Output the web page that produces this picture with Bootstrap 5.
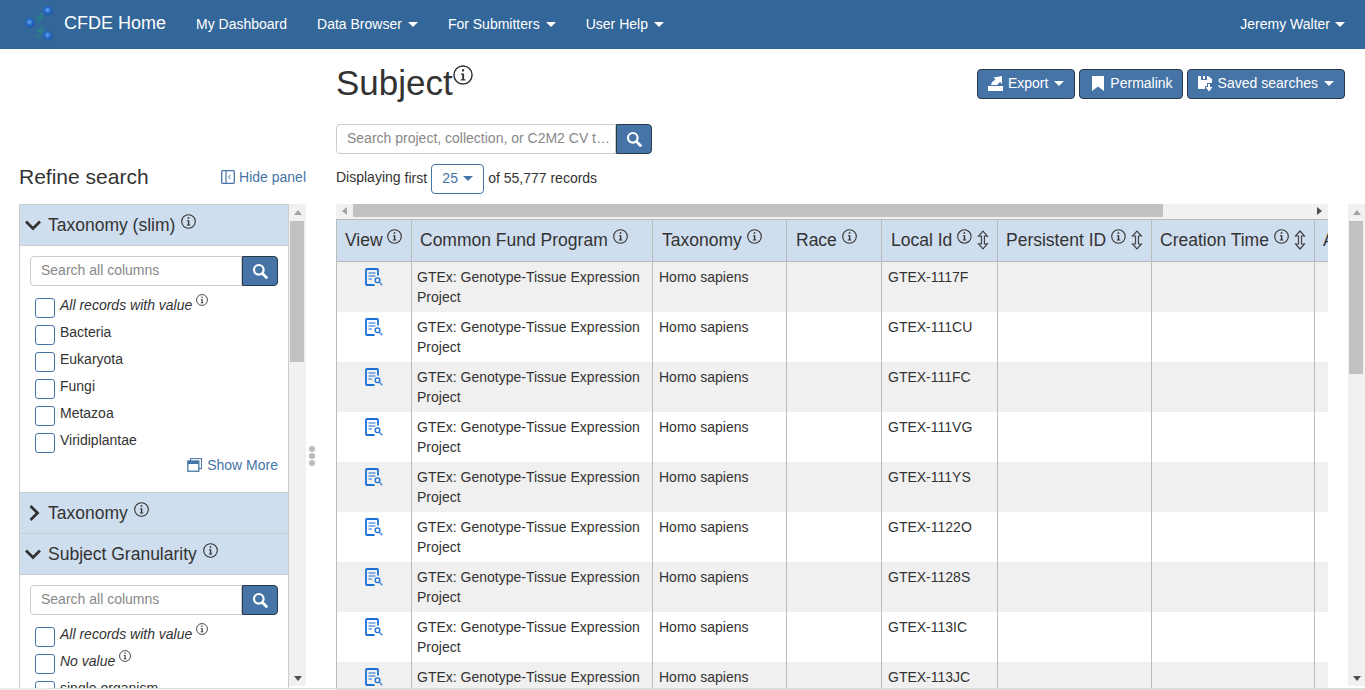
<!DOCTYPE html>
<html lang="en">
<head>
    <meta charset="UTF-8">
    <meta name="viewport" content="width=device-width, initial-scale=1.0">
    <title>Subject</title>
    <link href="https://cdn.jsdelivr.net/npm/bootstrap@5.3.0/dist/css/bootstrap.min.css" rel="stylesheet">
    <style>
        html, body { height: 690px; overflow: hidden; }
        body { font-family: "Liberation Sans", Arial, sans-serif; font-size: 14px; color: #333; line-height: 20px; }
        svg { display: block; }
        .ico-inline { display: inline-block; vertical-align: baseline; }

        .top-bar { background: #336699; height: 49px; padding: 0 20px 0 24px; }
        .top-bar .navbar-brand { font-size: 18px; color: #fff; padding: 0; margin: 0 30px 0 0; gap: 8px; position: relative; top: -2px; }
        .top-bar .navbar-brand svg { margin-top: 3px; }
        .top-bar .navbar-nav .nav-link { color: #fff; font-size: 14px; padding: 0; margin-right: 30px; line-height: 20px; position: relative; top: -1px; }
        .top-bar .navbar-nav .nav-link .caret-down { margin-left: 6px; }
        .top-bar .navbar-nav .user-link { margin-right: 0; }
        .top-bar .navbar-nav .user-link .caret-down { margin-left: 5px; }
        .caret-down { display: inline-block; width: 0; height: 0; margin-left: 5px; vertical-align: 2px; border-top: 5px solid currentColor; border-left: 5.5px solid transparent; border-right: 5.5px solid transparent; }

        .page-wrap { height: 639px; }
        .side-col { width: 306px; padding-left: 19px; flex: none; }
        .side-head { height: 40px; margin-top: 115px; }
        .side-head h2 { font-size: 21px; font-weight: 400; line-height: 26px; margin: 0; color: #333; }
        .hide-link, .more-link { color: #4674a7; text-decoration: none; font-size: 14px; }
        .hide-link { margin-top: 3px; }
        .side-box { height: 484px; }
        .facet-panel { width: 271px; border: 1px solid #ccc; border-bottom: 0; overflow: hidden; }
        .facet-head { background: #cfdeef; height: 41px; padding: 0 8px 0 4px; font-size: 17.5px; border-bottom: 1px solid #ccc; gap: 6px; flex: none; }
        .facet-head .chev { width: 18px; flex: none; }
        .facet-head .head-info { margin-bottom: 8px; }
        .facet-body { padding: 10px 10px 0 10px; border-bottom: 1px solid #ccc; }
        .facet-search { height: 30px; }
        .facet-search .form-control, .main-search .form-control { border: 1px solid #ccc; border-radius: 4px 0 0 4px; font-size: 14px; padding: 0 2px 2px 10px; height: 100%; box-shadow: none; color: #333; text-overflow: ellipsis; }
        .facet-search .form-control::placeholder, .main-search .form-control::placeholder { color: #888; opacity: 1; }
        .find-btn { background: #4674a7; border: 1px solid #2b3a4a; border-radius: 0 4px 4px 0; width: 36px; padding: 0; flex: none; }
        .check-list { margin: 7px 0 0 5px; }
        .check-row { height: 27px; gap: 5px; }
        .check-box { width: 20px; height: 20px; border: 1px solid #4674a7; border-radius: 3px; background: #fff; flex: none; margin-top: 5px; }
        .check-row .lbl { padding-top: 2px; }
        .check-row .lbl svg { margin-top: -1px; }
        .show-more { height: 25px; padding-bottom: 5px; gap: 5px; margin-bottom: 12px; }

        .scroll-y { width: 17px; flex: none; background: #f1f1f1; margin-bottom: 2px; }
        .scroll-x { height: 15px; background: #f1f1f1; flex: none; }
        .arrow-box { height: 16px; flex: none; }
        .arrow-box-h { width: 17px; flex: none; height: 13px; }
        .tri-up { width: 0; height: 0; border-left: 4.5px solid transparent; border-right: 4.5px solid transparent; border-bottom: 5px solid #a3a3a3; }
        .tri-down { width: 0; height: 0; border-left: 4.5px solid transparent; border-right: 4.5px solid transparent; border-top: 5px solid #505050; }
        .tri-left { width: 0; height: 0; border-top: 4.5px solid transparent; border-bottom: 4.5px solid transparent; border-right: 5px solid #a3a3a3; }
        .tri-right { width: 0; height: 0; border-top: 4.5px solid transparent; border-bottom: 4.5px solid transparent; border-left: 5px solid #505050; }
        .thumb { background: #c1c1c1; }
        .thumb-y { margin: 1px 2px 0 1px; flex: none; }
        .scroll-x .thumb { height: 13px; }
        .drag-handle { width: 30px; flex: none; gap: 1px; margin-top: 397px; height: 20px; padding-left: 3px; }
        .drag-handle i { width: 6px; height: 6px; border-radius: 50%; background: #bbb; display: block; }

        .main-col { flex: 1 1 0; min-width: 0; }
        .title-row { padding: 14px 20px 0 0; height: 75px; }
        .title-row h1 { font-size: 35px; line-height: 40px; font-weight: 400; margin: 0; color: #333; }
        .title-row h1 .title-info { position: relative; top: -10px; }
        .act-row { margin-top: 6px; }
        .act-btn { background: #4674a7; color: #fff; border: 1px solid #2b3a4a; border-radius: 4px; height: 30px; font-size: 14px; padding: 0 10px 2px; gap: 5px; }
        .act-btn .caret-down { margin-left: 1px; vertical-align: 0; }
        .act-btn .mark-ico { margin-left: 2px; margin-right: 1px; }
        .act-btn.perma-btn { padding-right: 9px; }
        .main-search { width: 316px; height: 30px; }
        .count-row { margin-top: 10px; height: 30px; gap: 4px; }
        .count-btn { border: 1px solid #4674a7; background: #fff; color: #4674a7; border-radius: 4px; width: 53px; height: 30px; padding: 0 0 3px; font-size: 14px; }
        .count-row .count-txt { position: relative; top: -1px; }
        .count-row .disp-word { position: relative; top: -2px; }

        .table-zone { height: 484px; margin-top: 10px; gap: 20px; }
        .table-wrap { width: 992px; flex: none; overflow: hidden; }
        .rec-table { table-layout: fixed; width: 1173px; margin: 0; border-collapse: collapse; color: #333; }
        .rec-table th { background: #cfdeef; font-size: 17.5px; font-weight: 400; height: 42px; padding: 0 8px 2px; border: 1px solid #bbb; white-space: nowrap; vertical-align: middle; box-shadow: none; overflow: hidden; }
        .rec-table th:nth-child(3), .rec-table th:nth-child(4), .rec-table th:nth-child(5) { padding-left: 9px; }
        .rec-table td { font-size: 14px; height: 50px; padding: 5px 5px 0; vertical-align: top; border: 0; border-left: 1px solid #bbb; border-right: 1px solid #bbb; line-height: 20px; background: #fff; box-shadow: none; color: #333; }
        .rec-table td:nth-child(3), .rec-table td:nth-child(5) { padding-left: 6px; }
        .rec-table tr:nth-child(odd) td { background: #f0f0f0; }
        .rec-table td.view-cell { padding-top: 6px; }
        .th-inner { gap: 5px; }
        .th-inner .head-info { margin-bottom: 6px; }
        .th-inner .view-info { margin-left: -1px; }

        .bottom-strip { height: 2px; }
        .strip-a { width: 48px; background: #ededed; }
        .strip-b { width: 288px; background: #f6f6f6; border-top: 1px solid #ddd; }
        .strip-c { flex: 1 1 0; background: #dcdcdc; }
    </style>
</head>
<body>
    <svg width="0" height="0" style="position:absolute">
        <defs>
            <radialGradient id="orb" cx="45%" cy="40%" r="60%">
                <stop offset="0" stop-color="#6aa8ee"/>
                <stop offset="0.55" stop-color="#1f66c4"/>
                <stop offset="1" stop-color="#2a5a96"/>
            </radialGradient>
            <symbol id="i-info" viewBox="0 0 15 15">
                <circle cx="7.5" cy="7.5" r="6.800" fill="none" stroke="currentColor" stroke-width="1.100"/>
                <rect x="6.700" y="3.200" width="1.600" height="1.600" fill="currentColor"/>
                <path d="M6 6.300h2.300v4.300h1v1H5.800v-1h1.100V7.300H6z" fill="currentColor"/>
            </symbol>
            <symbol id="i-search" viewBox="0 0 16 16">
                <circle cx="6.800" cy="6.800" r="4.800" fill="none" stroke="#fff" stroke-width="2.200"/>
                <path d="M10.400 10.400l4 4" stroke="#fff" stroke-width="2.800" stroke-linecap="round"/>
            </symbol>
            <symbol id="i-view" viewBox="0 0 18 18">
                <path d="M13 7.500V2a1 1 0 0 0-1-1H2a1 1 0 0 0-1 1v14a1 1 0 0 0 1 1h7.500" fill="none" stroke="#1a6fd6" stroke-width="1.800"/>
                <path d="M3.500 5h7M3.500 8h7M3.500 11h3.500" stroke="#1a6fd6" stroke-width="1.200"/>
                <circle cx="12.500" cy="12.300" r="2.400" fill="none" stroke="#1a6fd6" stroke-width="1.300"/>
                <path d="M14.300 14.200l3 3" stroke="#4a88d8" stroke-width="1.600"/>
            </symbol>
            <symbol id="i-sort" viewBox="0 0 12 20">
                <path d="M6 1L1.500 6h3v8h-3L6 19l4.500-5h-3V6h3z" fill="none" stroke="#444" stroke-width="1.200"/>
            </symbol>
            <symbol id="i-down" viewBox="0 0 18 12">
                <path d="M2 2.500l7 7 7-7" fill="none" stroke="#333" stroke-width="2.800"/>
            </symbol>
            <symbol id="i-right" viewBox="0 0 12 18">
                <path d="M2.500 2l7 7-7 7" fill="none" stroke="#333" stroke-width="2.800"/>
            </symbol>
        </defs>
    </svg>

    <nav class="navbar navbar-expand top-bar d-flex align-items-center flex-nowrap">
        <a class="navbar-brand d-flex align-items-center" href="#">
            <svg width="32" height="36" viewBox="0 0 32 36">
                <path d="M18.500 6.500l-5 5h4.500l-5.500 6M20 19.500l-6 5.500h5l-7 6" fill="none" stroke="#2a7f8a" stroke-width="1.800"/>
                <circle cx="24" cy="5" r="5" fill="url(#orb)"/>
                <circle cx="6" cy="17" r="5" fill="url(#orb)"/>
                <circle cx="24" cy="30" r="5" fill="url(#orb)"/>
            </svg>
            CFDE Home
        </a>
        <ul class="navbar-nav flex-row">
            <li class="nav-item"><a class="nav-link" href="#">My Dashboard</a></li>
            <li class="nav-item"><a class="nav-link" href="#">Data Browser<span class="caret-down"></span></a></li>
            <li class="nav-item"><a class="nav-link" href="#">For Submitters<span class="caret-down"></span></a></li>
            <li class="nav-item"><a class="nav-link" href="#">User Help<span class="caret-down"></span></a></li>
        </ul>
        <ul class="navbar-nav ms-auto">
            <li class="nav-item"><a class="nav-link user-link" href="#">Jeremy Walter<span class="caret-down"></span></a></li>
        </ul>
    </nav>

    <div class="page-wrap d-flex">
        <aside class="side-col d-flex flex-column">
            <div class="side-head d-flex justify-content-between align-items-start">
                <h2>Refine search</h2>
                <a class="hide-link d-flex align-items-center gap-1" href="#">
                    <svg width="14" height="14" viewBox="0 0 14 14"><rect x=".7" y=".7" width="12.600" height="12.600" rx="1" fill="none" stroke="#4674a7" stroke-width="1.300"/><path d="M5 1v12" stroke="#4674a7" stroke-width="1.200"/><path d="M9.500 5L7.500 7l2 2" fill="none" stroke="#4674a7"/></svg>
                    Hide panel
                </a>
            </div>
            <div class="side-box d-flex">
                <div class="facet-panel">
                    <div class="facet-head d-flex align-items-center">
                        <span class="chev"><svg width="18" height="12"><use href="#i-down"/></svg></span>
                        <span>Taxonomy (slim)</span>
                        <svg class="head-info" width="15" height="15"><use href="#i-info"/></svg>
                    </div>
                    <div class="facet-body">
                        <div class="facet-search d-flex">
                            <input class="form-control" placeholder="Search all columns">
                            <button class="find-btn d-flex align-items-center justify-content-center"><svg width="16" height="16"><use href="#i-search"/></svg></button>
                        </div>
                        <div class="check-list" id="slimList"></div>
                        <div class="show-more d-flex justify-content-end align-items-center">
                            <svg width="15" height="14" viewBox="0 0 15 14"><rect x="3.500" y=".6" width="11" height="10" fill="#fff" stroke="#4674a7"/><rect x=".8" y="3" width="11" height="10.200" fill="#fff" stroke="#4674a7" stroke-width="1.300"/><rect x="1" y="3" width="10.600" height="3" fill="#4674a7"/></svg>
                            <a class="more-link" href="#">Show More</a>
                        </div>
                    </div>
                    <div class="facet-head d-flex align-items-center">
                        <span class="chev ps-1"><svg width="12" height="18"><use href="#i-right"/></svg></span>
                        <span>Taxonomy</span>
                        <svg class="head-info" width="15" height="15"><use href="#i-info"/></svg>
                    </div>
                    <div class="facet-head d-flex align-items-center">
                        <span class="chev"><svg width="18" height="12"><use href="#i-down"/></svg></span>
                        <span>Subject Granularity</span>
                        <svg class="head-info" width="15" height="15"><use href="#i-info"/></svg>
                    </div>
                    <div class="facet-body">
                        <div class="facet-search d-flex">
                            <input class="form-control" placeholder="Search all columns">
                            <button class="find-btn d-flex align-items-center justify-content-center"><svg width="16" height="16"><use href="#i-search"/></svg></button>
                        </div>
                        <div class="check-list" id="granList"></div>
                    </div>
                </div>
                <div class="scroll-y d-flex flex-column ms-auto">
                    <div class="arrow-box d-flex align-items-center justify-content-center"><span class="tri-up"></span></div>
                    <div class="thumb thumb-y" style="height:141px"></div>
                    <div class="flex-grow-1"></div>
                    <div class="arrow-box d-flex align-items-center justify-content-center"><span class="tri-down"></span></div>
                </div>
            </div>
        </aside>

        <div class="drag-handle d-flex flex-column align-items-start">
            <i></i><i></i><i></i>
        </div>

        <main class="main-col d-flex flex-column">
            <div class="title-row d-flex justify-content-between align-items-start">
                <h1>Subject<svg class="ico-inline title-info" width="20" height="20"><use href="#i-info"/></svg></h1>
                <div class="act-row d-flex gap-1">
                    <button class="act-btn d-flex align-items-center">
                        <svg width="15" height="16" viewBox="0 0 15 16"><path d="M0 11h15v5H0z" fill="#fff"/><path d="M3 10l1-3 3.500-2.500L5.500 2.500 14 1v8l-2-2-3 3z" fill="#fff"/></svg>
                        Export<span class="caret-down"></span>
                    </button>
                    <button class="act-btn perma-btn d-flex align-items-center">
                        <svg class="mark-ico" width="12" height="15" viewBox="0 0 12 15"><path d="M0 0h12v15l-6-4.500L0 15z" fill="#fff"/></svg>
                        <span>Permalink</span>
                    </button>
                    <button class="act-btn d-flex align-items-center">
                        <svg width="15" height="17" viewBox="0 0 15 17"><path d="M0 1h3v4h6V1h1l4 3v4H9v3H7v3H1a1 1 0 0 1-1-1z" fill="#fff"/><path d="M5 1h2v3H5z" fill="#fff"/><path d="M10 9h2v3h2.500L11 16.500 7.500 12H10z" fill="#fff"/></svg>
                        Saved searches<span class="caret-down"></span>
                    </button>
                </div>
            </div>
            <div class="main-search d-flex">
                <input class="form-control" placeholder="Search project, collection, or C2M2 CV term">
                <button class="find-btn d-flex align-items-center justify-content-center"><svg width="16" height="16"><use href="#i-search"/></svg></button>
            </div>
            <div class="count-row d-flex align-items-center">
                <span class="disp-word">Displaying</span>
                <span class="count-txt">first</span>
                <button class="count-btn">25<span class="caret-down"></span></button>
                <span class="count-txt">of 55,777 records</span>
            </div>
            <div class="table-zone d-flex">
                <div class="table-wrap">
                    <div class="scroll-x d-flex">
                        <div class="arrow-box-h d-flex align-items-center justify-content-center"><span class="tri-left"></span></div>
                        <div class="thumb" style="width:810px"></div>
                        <div class="flex-grow-1"></div>
                        <div class="arrow-box-h d-flex align-items-center justify-content-center"><span class="tri-right"></span></div>
                    </div>
                    <table class="table rec-table">
                        <colgroup>
                            <col style="width:75px"><col style="width:241px"><col style="width:134px"><col style="width:95px"><col style="width:116px"><col style="width:154px"><col style="width:163px"><col style="width:195px">
                        </colgroup>
                        <thead><tr id="headRow"></tr></thead>
                        <tbody id="recBody"></tbody>
                    </table>
                </div>
                <div class="scroll-y d-flex flex-column">
                    <div class="arrow-box d-flex align-items-center justify-content-center"><span class="tri-up"></span></div>
                    <div class="thumb thumb-y" style="height:153px"></div>
                    <div class="flex-grow-1"></div>
                    <div class="arrow-box d-flex align-items-center justify-content-center"><span class="tri-down"></span></div>
                </div>
            </div>
        </main>
    </div>
    <div class="bottom-strip d-flex">
        <div class="strip-a"></div><div class="strip-b"></div><div class="strip-c"></div>
    </div>

    <script>
        const sort = '<svg width="12" height="20"><use href="#i-sort"/></svg>';

        function addChecks(id, items) {
            document.getElementById(id).innerHTML = items.map(it =>
                `<div class="check-row d-flex align-items-start"><span class="check-box"></span><span class="lbl d-flex gap-1 ${it.em ? 'fst-italic' : ''}">${it.text}${it.em ? '<svg width="12" height="12"><use href="#i-info"/></svg>' : ''}</span></div>`
            ).join('');
        }
        addChecks('slimList', [
            { text: 'All records with value', em: true },
            { text: 'Bacteria' }, { text: 'Eukaryota' }, { text: 'Fungi' }, { text: 'Metazoa' }, { text: 'Viridiplantae' }
        ]);
        addChecks('granList', [
            { text: 'All records with value', em: true },
            { text: 'No value', em: true },
            { text: 'single organism' }
        ]);

        const heads = [
            ['View', false], ['Common Fund Program', false], ['Taxonomy', false], ['Race', false],
            ['Local Id', true], ['Persistent ID', true], ['Creation Time', true], ['Age', false]
        ];
        document.getElementById('headRow').innerHTML = heads.map((h, i) =>
            `<th><div class="th-inner d-flex align-items-center"><span>${h[0]}</span><svg width="15" height="15" class="head-info ${i === 0 ? 'view-info' : ''}"><use href="#i-info"/></svg>${h[1] ? sort : ''}</div></th>`
        ).join('');

        const ids = ['GTEX-1117F', 'GTEX-111CU', 'GTEX-111FC', 'GTEX-111VG', 'GTEX-111YS', 'GTEX-1122O', 'GTEX-1128S', 'GTEX-113IC', 'GTEX-113JC'];
        document.getElementById('recBody').innerHTML = ids.map(id => `
            <tr>
                <td class="view-cell"><svg class="mx-auto" width="18" height="18"><use href="#i-view"/></svg></td>
                <td>GTEx: Genotype-Tissue Expression Project</td>
                <td>Homo sapiens</td>
                <td></td>
                <td>${id}</td>
                <td></td><td></td><td></td>
            </tr>`).join('');
    </script>

    <script src="https://cdn.jsdelivr.net/npm/bootstrap@5.3.0/dist/js/bootstrap.bundle.min.js"></script>
</body>
</html>
